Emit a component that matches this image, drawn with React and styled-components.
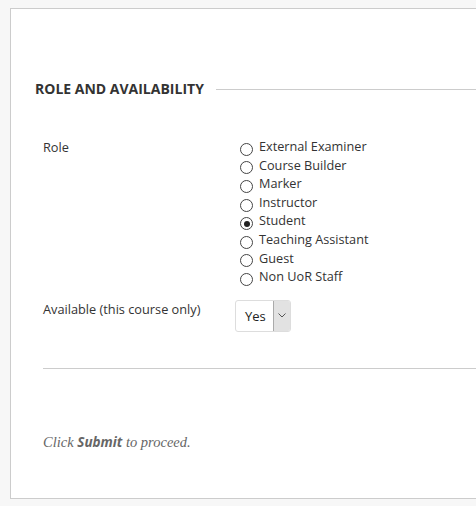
import React from 'react';
import styled, { createGlobalStyle } from 'styled-components';

const GlobalStyle = createGlobalStyle`
  body {
    margin: 0;
    background: #f7f7f7;
    font-family: "Open Sans", "Liberation Sans", sans-serif;
    color: #333;
  }
`

const roles = [
  'External Examiner',
  'Course Builder',
  'Marker',
  'Instructor',
  'Student',
  'Teaching Assistant',
  'Guest',
  'Non UoR Staff',
]

const App = () => {
  return (
    <>
      <GlobalStyle />
      <Page>
        <Panel>
          <SectionHeader>
            <h2>ROLE AND AVAILABILITY</h2>
            <Rule />
          </SectionHeader>

          <Fields>
            <Field>
              <Label>Role</Label>
              <RadioList>
                {roles.map(r => (
                  <RadioRow key={r}>
                    <Radio checked={r === 'Student'} />
                    <span>{r}</span>
                  </RadioRow>
                ))}
              </RadioList>
            </Field>

            <Field $gap>
              <Label>Available (this course only)</Label>
              <Select>
                <span>Yes</span>
                <Arrow>
                  <svg width="8" height="5" viewBox="0 0 8 5">
                    <path d="M0.5 0.5 L4 4 L7.5 0.5" fill="none" stroke="#555" strokeWidth="1" />
                  </svg>
                </Arrow>
              </Select>
            </Field>
          </Fields>

          <Divider />

          <Note>
            Click <strong>Submit</strong> to proceed.
          </Note>
        </Panel>
      </Page>
    </>
  )
}
export default App;

const Page = styled.div`
  padding: 8px 0 7px 10px;
`

const Panel = styled.div`
  background: #fff;
  border: 1px solid #ccc;
  border-right: none;
  padding: 71px 0 0 24px;
  box-sizing: border-box;
  height: 491px;
`

const SectionHeader = styled.div`
  display: flex;
  align-items: center;

  h2 {
    margin: 0;
    font-size: 14px;
    line-height: 18px;
    font-weight: 700;
    color: #333;
    white-space: nowrap;
  }
`

const Rule = styled.div`
  flex: 1;
  height: 1px;
  background: #ccc;
  margin-left: 12px;
`

const Fields = styled.div`
  padding-left: 8px;
  margin-top: 40px;
`

const Field = styled.div`
  display: flex;
  align-items: flex-start;
  margin-top: ${p => (p.$gap ? '14px' : '0')};
`

const Label = styled.div`
  width: 192px;
  font-size: 12.75px;
  line-height: 18.6px;
  color: #333;
`

const RadioList = styled.div`
  display: flex;
  flex-direction: column;
  padding-left: 5px;
  margin-top: -1px;
`

const RadioRow = styled.label`
  display: flex;
  align-items: center;
  font-size: 12.7px;
  line-height: 18.6px;
  color: #333;
  height: 18.6px;
`

const Radio = styled.span`
  width: 11px;
  height: 11px;
  border: 1px solid #444;
  border-radius: 50%;
  margin-right: 6px;
  position: relative;
  top: 3px;
  flex-shrink: 0;
  background: #fff;

  &::after {
    content: '';
    display: ${p => (p.checked ? 'block' : 'none')};
    position: absolute;
    left: 2.5px;
    top: 2.5px;
    width: 6px;
    height: 6px;
    border-radius: 50%;
    background: #222;
  }
`

const Select = styled.div`
  display: flex;
  align-items: stretch;
  height: 30px;
  margin-top: 0;
  border: 1px solid #ddd;
  border-radius: 3px;
  overflow: hidden;

  span {
    display: flex;
    align-items: center;
    padding: 0 7px 0 9px;
    font-size: 13px;
    color: #222;
  }
`

const Arrow = styled.div`
  width: 16px;
  background: #e2e2e2;
  border-left: 1px solid #aaa;
  display: flex;
  align-items: center;
  justify-content: center;
`

const Divider = styled.div`
  height: 1px;
  background: #ccc;
  margin: 36px 0 0 8px;
`

const Note = styled.p`
  margin: 64px 0 0 8px;
  font-family: "Liberation Serif", serif;
  font-style: italic;
  font-size: 14.5px;
  color: #666;

  strong {
    font-family: "Open Sans", sans-serif;
    font-style: italic;
    font-weight: 700;
    font-size: 13.5px;
  }
`
